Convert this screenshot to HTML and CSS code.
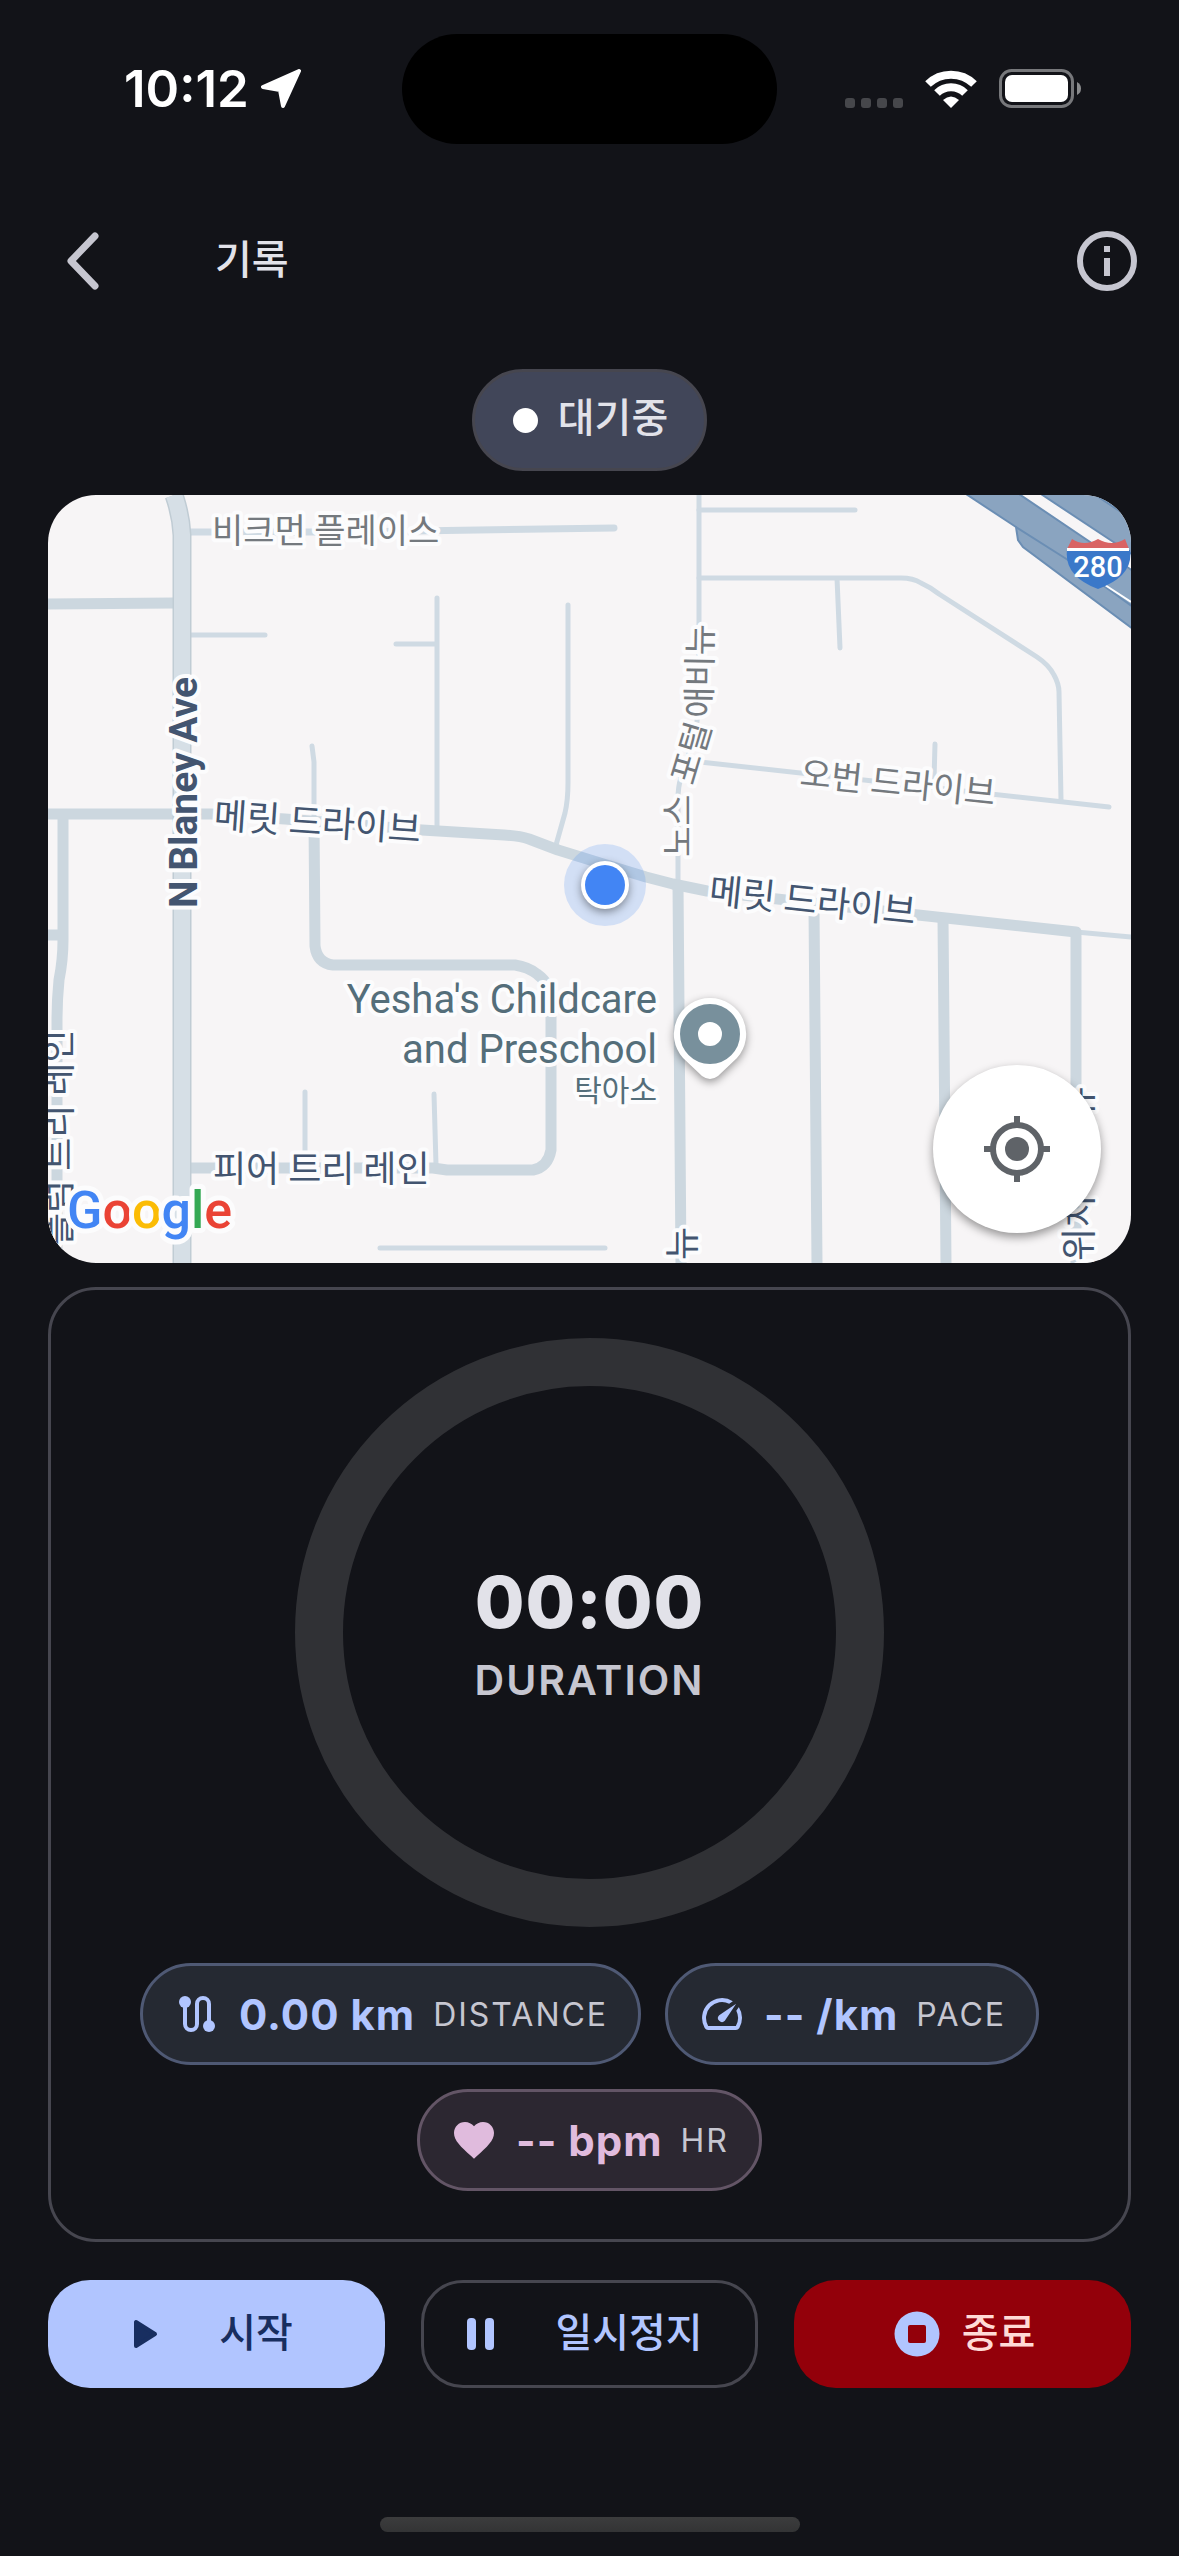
FILE: index.html
```html
<!DOCTYPE html>
<html lang="ko">
<head>
<meta charset="utf-8">
<meta name="viewport" content="width=device-width, initial-scale=1">
<title>기록</title>
<link rel="stylesheet" href="styles.css">
</head>
<body>
<div class="status-bar">
  <div class="status-left">
    <span class="clock">10:12</span>
    <svg class="location-icon" viewBox="0 0 40 40" aria-hidden="true"><path d="M38 2 L2 18 L19 21 L22 37 Z" fill="#fff" stroke="#fff" stroke-width="4" stroke-linejoin="round"/></svg>
  </div>
  <div class="island"></div>
  <div class="status-right">
    <svg class="cell-icon" viewBox="0 0 58 10" aria-hidden="true"><g fill="#46474b"><rect width="10" height="10" rx="3"/><rect x="16" width="10" height="10" rx="3"/><rect x="32" width="10" height="10" rx="3"/><rect x="48" width="10" height="10" rx="3"/></g></svg>
    <svg class="wifi-icon" viewBox="0 0 52 38" aria-hidden="true"><g fill="none" stroke="#fff" stroke-width="8"><path d="M3 14 A33 33 0 0 1 49 14"/><path d="M12 23 A20 20 0 0 1 40 23"/></g><path d="M26 38 L18 30 Q26 23 34 30 Z" fill="#fff"/></svg>
    <svg class="battery-icon" viewBox="0 0 82 39" aria-hidden="true"><rect x="1.5" y="1.5" width="72" height="36" rx="11" fill="none" stroke="#77787b" stroke-width="3"/><rect x="6" y="6" width="63" height="27" rx="7" fill="#fff"/><path d="M78 13 Q82 15 82 19.500 Q82 24 78 26 Z" fill="#8a8b8d"/></svg>
  </div>
</div>

<header class="app-bar">
  <button class="icon-button" type="button" aria-label="뒤로"><svg viewBox="0 0 34 60"><path d="M29 5 L5 30 L29 55" fill="none" stroke="#c6c6d0" stroke-width="7" stroke-linecap="round" stroke-linejoin="round"/></svg></button>
  <h1 class="title">기록</h1>
  <button class="icon-button" type="button" aria-label="정보"><svg viewBox="0 0 60 60"><circle cx="30" cy="30" r="27" fill="none" stroke="#c6c6d0" stroke-width="6"/><path d="M27 15h6v6h-6zM27 27h6v18h-6z" fill="#c6c6d0"/></svg></button>
</header>

<main class="content">
  <div class="state-pill"><span class="state-dot"></span>대기중</div>

  <section class="map" aria-label="지도">
    <svg class="map-canvas" viewBox="48 495 1083 768" preserveAspectRatio="xMidYMid slice">
      <rect x="48" y="495" width="1083" height="768" fill="#f7f5f6"/>
      <!-- lanes -->
      <g fill="none" stroke="#cfdae3" stroke-width="5" stroke-linecap="round" stroke-linejoin="round">
        <path d="M190 532 L350 532 L614 528" stroke-width="7"/>
        <path d="M190 635 H265M437 598 V827M396 644 H436"/>
        <path d="M568 605 V783 Q568 800 565 813 L556 845M312 746 L314 762 V820"/>
        <path d="M305 1092 V1165M434 1094 L436 1165M380 1248 H605"/>
        <path d="M699 495 V700 L696 732 L681 778 Q678 786 678 800 V885"/>
        <path d="M699 510 H855M699 578 H901 Q913 578 921 583 Q930 587 939 594 L1037 657 Q1049 665 1054 675 Q1059 684 1059 692 L1061 800M837 578 L840 648"/>
        <path d="M700 762 L1109 807M935 744 L934 780M1076 932 L1131 937"/>
      </g>
      <!-- streets -->
      <g fill="none" stroke="#ccd7df" stroke-width="11" stroke-linejoin="round">
        <path d="M48 604 L174 603M48 814 H211 L285 819 L422 830 L504 835 Q520 836 529 839 L558 850 L600 863 L646 877 L673 884 L707 891 L918 915 L1076 932 V1263"/>
        <path d="M63 815 V940 Q63 960 59 980 Q57 1000 57 1020 V1263M48 935 H63"/>
        <path d="M314 820 L315 946 Q317 963 333 965 H515 Q528 967 537 974 Q551 984 551 1000 V1150 Q548 1167 533 1170 H447 L433 1168 H190"/>
        <path d="M678 884 L681 1263M814 908 L817 1263M943 918 L946 1263"/>
      </g>
      <!-- N Blaney Ave -->
      <path d="M174 495 Q181 515 182 535 V1263" fill="none" stroke="#c0ccd4" stroke-width="19"/>
      <path d="M174 495 Q181 515 182 535 V1263" fill="none" stroke="#d6dfe6" stroke-width="16"/>
      <!-- interstate -->
      <g fill="#8aa4c0" stroke="#6b8eb4" stroke-width="2">
        <path d="M966 494 L1016 527 L1018 540 L1023 547 L1133 629 V571 L1019 494 Z"/>
        <path d="M1041 494 L1133 555 V494 Z"/>
        <path d="M1016 527 L1068 560 L1133 607M1094 494 L1133 520" fill="none"/>
        <path d="M1105 585 L1131 602" fill="none" stroke="#fff"/>
      </g>
      <path d="M1067 550 H1130 Q1134 576 1098 589 Q1064 576 1067 550Z" fill="#3a78c9"/>
      <path d="M1067 549 L1072 539 Q1084 547 1098 539 Q1112 547 1125 539 L1129 549Z" fill="#d96363"/>
      <path d="M1067 548 H1129 V551 H1067Z" fill="#fff"/>
      <text class="map-shield" x="1098" y="577">280</text>

      <g class="map-label map-label-minor">
        <text class="size-34" x="212" y="543">비크먼 플레이스</text>
        <text class="size-34" transform="translate(799 785) rotate(6)">오번 드라이브</text>
        <path id="portal" d="M690 857 V798 L711 728 L713 600" fill="none" stroke="none"/>
        <text class="size-34"><textPath href="#portal">노스 포털 애비뉴</textPath></text>
      </g>
      <g class="map-label map-label-street">
        <text class="size-39" transform="translate(197 908) rotate(-90)">N Blaney Ave</text>
        <text class="size-36" transform="translate(213 828) rotate(4)">메릿 드라이브</text>
        <text class="size-36" transform="translate(708 903) rotate(6)">메릿 드라이브</text>
        <text class="size-36" x="213" y="1182">피어 트리 레인</text>
        <text class="size-36" transform="translate(71 1246) rotate(-90)">플럼 트리 레인</text>
        <text class="size-36" transform="translate(695 1260) rotate(-90)">뉴</text>
        <text class="size-36" transform="translate(1092 1294) rotate(-90)">노위치 애비뉴</text>
      </g>
      <g class="map-label map-label-place">
        <text class="size-40" x="657" y="1013">Yesha's Childcare</text>
        <text class="size-40" x="657" y="1063">and Preschool</text>
        <text class="size-30" x="657" y="1101">탁아소</text>
      </g>

      <!-- current position -->
      <circle cx="605" cy="885" r="41" fill="#4285f4" fill-opacity=".2"/>
      <circle class="soft-shadow" cx="605" cy="885" r="24" fill="#fff"/>
      <circle cx="605" cy="885" r="20" fill="#4285f4"/>
      <!-- place pin -->
      <path class="soft-shadow" d="M710 998 A36 36 0 0 1 737 1058 L718 1076 Q710 1082 702 1076 L683 1058 A36 36 0 0 1 710 998Z" fill="#fff"/>
      <circle cx="710" cy="1034" r="21" fill="none" stroke="#78909c" stroke-width="18"/>
      <text class="map-logo" x="67" y="1228"><tspan fill="#4285f4">G</tspan><tspan fill="#ea4335">o</tspan><tspan fill="#fbbc05">o</tspan><tspan fill="#4285f4">g</tspan><tspan fill="#34a853">l</tspan><tspan fill="#ea4335">e</tspan></text>
    </svg>
    <button class="locate-button" type="button" aria-label="내 위치"><svg viewBox="0 0 66 66"><g fill="none" stroke="#5f6368" stroke-width="6"><circle cx="33" cy="33" r="24"/><path d="M33 0V9M33 57V66M0 33H9M57 33H66"/></g><circle cx="33" cy="33" r="12" fill="#5f6368"/></svg></button>
  </section>

  <section class="stats-card">
    <div class="ring">
      <div class="time">00:00</div>
      <div class="time-label">DURATION</div>
    </div>
    <div class="chips">
      <div class="chip">
        <svg viewBox="0 0 24 24" aria-hidden="true"><g fill="none" stroke="#b1c5ff" stroke-width="2"><path d="M6 7v10a3 3 0 0 0 6 0V7a3 3 0 0 1 6 0v10"/></g><circle cx="6" cy="6" r="3" fill="#b1c5ff"/><circle cx="18" cy="18" r="3" fill="#b1c5ff"/></svg>
        <span class="chip-value">0.00 km</span><span class="chip-label">DISTANCE</span>
      </div>
      <div class="chip">
        <svg viewBox="0 0 24 24" aria-hidden="true"><path fill="#b1c5ff" d="M20.380 8.570l-1.230 1.850a8 8 0 0 1-.22 7.580H5.070A8 8 0 0 1 15.580 6.850l1.850-1.230A10 10 0 0 0 3.350 19a2 2 0 0 0 1.720 1h13.850a2 2 0 0 0 1.740-1 10 10 0 0 0-.27-10.440zM10.590 15.410a2 2 0 0 0 2.830 0l5.660-8.490-8.490 5.660a2 2 0 0 0 0 2.830z"/></svg>
        <span class="chip-value">-- /km</span><span class="chip-label">PACE</span>
      </div>
      <div class="chip chip-heart">
        <svg viewBox="0 0 24 24" aria-hidden="true"><path fill="#e0bbdd" d="M12 21.350l-1.450-1.320C5.400 15.360 2 12.280 2 8.500 2 5.420 4.420 3 7.500 3c1.740 0 3.410.81 4.500 2.090C13.090 3.810 14.760 3 16.500 3 19.580 3 22 5.420 22 8.500c0 3.780-3.400 6.860-8.550 11.540L12 21.350z"/></svg>
        <span class="chip-value">-- bpm</span><span class="chip-label">HR</span>
      </div>
    </div>
  </section>

  <div class="actions">
    <button class="action action-start" type="button"><svg viewBox="0 0 54 54" aria-hidden="true"><path d="M18 15 V39 L37 27 Z" fill="#182e60" stroke="#182e60" stroke-width="4" stroke-linejoin="round"/></svg><span>시작</span></button>
    <button class="action action-pause" type="button"><svg viewBox="0 0 54 54" aria-hidden="true"><rect x="13" y="11" width="9" height="32" rx="4" fill="#b1c5ff"/><rect x="31" y="11" width="9" height="32" rx="4" fill="#b1c5ff"/></svg><span>일시정지</span></button>
    <button class="action action-stop" type="button"><svg viewBox="0 0 54 54" aria-hidden="true"><circle cx="27" cy="27" r="22.500" fill="#b1c5ff"/><rect x="18" y="18" width="18" height="18" rx="2" fill="#93000a"/></svg><span>종료</span></button>
  </div>
</main>
<div class="home-indicator"></div>
</body>
</html>
```
FILE: styles.css
```css
* {
  box-sizing: border-box;
}

body {
  margin: 0;
  min-height: 100vh;
  display: flex;
  flex-direction: column;
  background: #121318;
  color: #e2e2e9;
  font-family: Inter, "Noto Sans CJK KR", sans-serif;
}

button {
  margin: 0;
  padding: 0;
  border: 0;
  background: none;
  color: inherit;
  font: inherit;
}

svg {
  display: block;
}

/* status bar */
.status-bar {
  display: grid;
  grid-template-columns: 1fr auto 1fr;
  align-items: center;
  height: 177px;
  padding: 0 98px 0 124px;
  color: #fff;
}

.status-left {
  display: flex;
  align-items: center;
  gap: 12px;
}

.clock {
  font-size: 51px;
  line-height: 60px;
  font-weight: 600;
}

.location-icon {
  width: 40px;
  height: 40px;
}

.island {
  width: 375px;
  height: 110px;
  margin-right: 26px;
  border-radius: 55px;
  background: #000;
}

.status-right {
  display: flex;
  align-items: flex-end;
  justify-content: flex-end;
  gap: 22px;
}

.cell-icon {
  width: 58px;
  height: 10px;
}

.wifi-icon {
  width: 52px;
  height: 38px;
}

.battery-icon {
  width: 82px;
  height: 39px;
}

/* app bar */
.app-bar {
  display: flex;
  align-items: center;
  height: 168px;
  padding: 0 42px 0 66px;
}

.icon-button svg {
  height: 60px;
}

.title {
  flex: 1;
  margin: 0 0 2px 115px;
  font-size: 40px;
  line-height: 60px;
  font-weight: 500;
}

/* content */
.content {
  display: flex;
  flex-direction: column;
  gap: 24px;
  padding: 24px 48px;
}

.state-pill {
  align-self: center;
  display: flex;
  align-items: center;
  gap: 20px;
  height: 102px;
  padding: 0 36px 10px 38px;
  border: 3px solid #46464f;
  border-radius: 51px;
  background: #414659;
  font-size: 40px;
  font-weight: 500;
}

.state-dot {
  width: 25px;
  height: 25px;
  margin-top: 10px;
  border-radius: 50%;
  background: #fff;
}

/* map */
.map {
  position: relative;
  overflow: hidden;
  border-radius: 48px;
}

.map-canvas {
  width: 100%;
  height: 768px;
}

.map-label {
  stroke: #fcfcfd;
  stroke-width: 8px;
  stroke-linejoin: round;
  paint-order: stroke;
  font-family: Roboto, "Noto Sans CJK KR", sans-serif;
}

.map-label-minor {
  fill: #74797e;
}

.map-label-street {
  fill: #435570;
}

.map-label-place {
  fill: #546e7a;
  text-anchor: end;
}

.size-30 { font-size: 30px; }
.size-34 { font-size: 34px; }
.size-36 { font-size: 36px; }
.size-39 { font-size: 39px; font-weight: 700; }
.size-40 { font-size: 40px; }

.map-shield {
  fill: #fff;
  font-family: Roboto, sans-serif;
  font-size: 29px;
  font-weight: 500;
  text-anchor: middle;
}

.map-logo {
  stroke: #fcfcfd;
  stroke-width: 10px;
  stroke-linejoin: round;
  paint-order: stroke;
  font-family: Roboto, sans-serif;
  font-size: 52px;
  font-weight: 500;
}

.soft-shadow {
  filter: drop-shadow(0 3px 4px rgba(0, 0, 0, .4));
}

.locate-button {
  position: absolute;
  right: 30px;
  bottom: 30px;
  display: grid;
  place-items: center;
  width: 168px;
  height: 168px;
  border-radius: 50%;
  background: #fff;
  box-shadow: 0 4px 10px rgba(0, 0, 0, .4);
}

.locate-button svg {
  width: 66px;
  height: 66px;
}

/* stats */
.stats-card {
  display: flex;
  flex-direction: column;
  align-items: center;
  gap: 36px;
  padding: 48px 45px;
  border: 3px solid #46464f;
  border-radius: 48px;
}

.ring {
  display: flex;
  flex-direction: column;
  align-items: center;
  justify-content: center;
  width: 589px;
  height: 589px;
  padding-top: 4px;
  border: 48px solid #303135;
  border-radius: 50%;
}

.time {
  font-size: 72px;
  line-height: 90px;
  font-weight: 800;
  letter-spacing: 1px;
}

.time-label {
  color: #c6c6d0;
  font-size: 41px;
  line-height: 66px;
  font-weight: 600;
  letter-spacing: 2px;
}

.chips {
  display: flex;
  flex-wrap: wrap;
  justify-content: center;
  gap: 24px;
}

.chip {
  display: flex;
  align-items: center;
  gap: 18px;
  height: 102px;
  padding: 0 30px;
  border: 3px solid #4f5974;
  border-radius: 51px;
  background: #252932;
  color: #b1c5ff;
}

.chip svg {
  width: 48px;
  height: 48px;
}

.chip-value {
  font-size: 42px;
  font-weight: 700;
  letter-spacing: 1px;
}

.chip-label {
  color: #c6c6d0;
  font-size: 32px;
  letter-spacing: 2px;
}

.chip-heart {
  border-color: #635566;
  background: #2c2731;
  color: #e0bbdd;
}

/* actions */
.actions {
  display: grid;
  grid-template-columns: repeat(3, 1fr);
  gap: 36px;
  margin-top: 14px;
}

.action {
  display: flex;
  align-items: center;
  justify-content: center;
  gap: 47px;
  height: 108px;
  padding-right: 22px;
  border-radius: 42px;
  font-size: 40px;
  font-weight: 500;
}

.action span {
  padding-bottom: 9px;
}

.action svg {
  width: 54px;
  height: 54px;
}

.action-start {
  background: #b1c5ff;
  color: #182e60;
}

.action-pause {
  border: 3px solid #46464f;
  color: #b1c5ff;
}

.action-stop {
  gap: 18px;
  padding-right: 0;
  background: #93000a;
  color: #ffdad6;
}

.home-indicator {
  align-self: center;
  width: 420px;
  max-width: 60%;
  height: 15px;
  margin: auto 0 24px;
  border-radius: 8px;
  background: linear-gradient(#3c3c3d, #333435);
}
```
